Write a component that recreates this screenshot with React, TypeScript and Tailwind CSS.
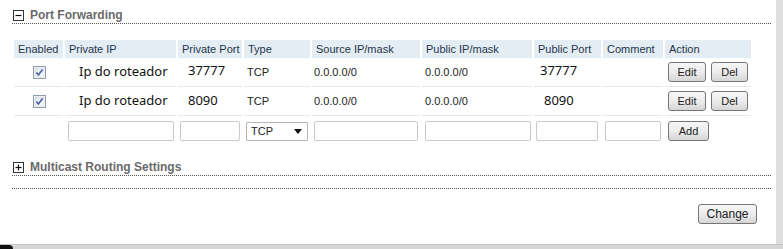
import React from "react";

const cols = "grid-cols-[49px_111px_64px_66px_108px_110px_67px_60px_86px]";

const headers = ["Enabled", "Private IP", "Private Port", "Type", "Source IP/mask", "Public IP/mask", "Public Port", "Comment", "Action"];

const rules = [
  { ip: "Ip do roteador", port: "37777", type: "TCP", src: "0.0.0.0/0", pub: "0.0.0.0/0", pubPort: "37777" },
  { ip: "Ip do roteador", port: "8090", type: "TCP", src: "0.0.0.0/0", pub: "0.0.0.0/0", pubPort: "8090" },
];

function Btn({ label, className = "" }: { label: string; className?: string }) {
  return (
    <button
      className={`h-[20px] rounded-[3px] border border-[#767676] bg-gradient-to-b from-[#f7f7f7] via-[#ececec] to-[#d6d6d6] text-[11px] text-[#222] font-['Liberation_Sans',Arial,sans-serif] leading-none ${className}`}
    >
      {label}
    </button>
  );
}

function Check() {
  return (
    <svg width="13" height="13" viewBox="0 0 13 13">
      <defs>
        <linearGradient id="cb" x1="0" y1="0" x2="1" y2="1">
          <stop offset="0" stopColor="#dfe3ea" />
          <stop offset="1" stopColor="#ffffff" />
        </linearGradient>
      </defs>
      <rect x="0.5" y="0.5" width="12" height="12" fill="#fff" stroke="#8f9cab" />
      <rect x="2" y="2" width="9" height="9" fill="url(#cb)" stroke="#c4ccd6" strokeWidth="0.6" />
      <path d="M3.4 6.4 L5.4 9 L9.6 3.4" fill="none" stroke="#4a5fa8" strokeWidth="1.6" />
    </svg>
  );
}

function Toggle({ plus }: { plus?: boolean }) {
  return (
    <svg width="11" height="11" viewBox="0 0 11 11">
      <rect x="0.5" y="0.5" width="10" height="10" fill="#fff" stroke="#333" />
      <path d="M2.5 5.5 H8.5" stroke="#111" strokeWidth="1.2" />
      {plus && <path d="M5.5 2.5 V8.5" stroke="#111" strokeWidth="1.2" />}
    </svg>
  );
}

function Field({ className = "" }: { className?: string }) {
  return <div className={`h-[20px] border border-[#c9c9c9] rounded-[2px] bg-white ${className}`} />;
}

export default function App() {
  const cell = "h-[29px] border-b border-[#e8e8e8] flex items-center whitespace-nowrap";
  const small = "font-['Liberation_Sans',Arial,sans-serif] text-[11px] text-[#222]";
  const typed = "font-['Noto_Sans',sans-serif] text-[13px] text-[#111]";
  return (
    <div className="w-[783px] h-[249px] flex flex-col overflow-hidden bg-[#dadada]">
      <div className="flex flex-1 min-h-0">
        <div className="w-[776px] bg-white pl-[12px] pr-[5px] pt-[8px] font-['Liberation_Sans',Arial,sans-serif]">
          {/* Port Forwarding */}
          <div className="flex items-center gap-[6px] pl-[1px] pb-[1px] border-b border-dotted border-[#555]">
            <Toggle />
            <span className="text-[12px] leading-[14px] font-bold text-[#6a6a6a]">Port Forwarding</span>
          </div>

          <div className={`grid ${cols} gap-x-[2px] mt-[16px] ml-[2px]`}>
            {headers.map((h) => (
              <div key={h} className="h-[18px] bg-[#e4ecf4] pl-[4px] whitespace-nowrap overflow-hidden text-[11px] leading-[18px] text-[#24364a]">
                {h}
              </div>
            ))}

            {rules.map((r, i) => (
              <React.Fragment key={i}>
                <div className={`${cell} justify-center pl-[1px]`}>
                  <Check />
                </div>
                <div className={`${cell} pl-[14px] ${typed}`}>{r.ip}</div>
                <div className={`${cell} pl-[10px] ${typed} ${i === 0 ? "pb-[3px]" : ""}`}>{r.port}</div>
                <div className={`${cell} pl-[3px] ${small}`}>{r.type}</div>
                <div className={`${cell} pl-[2px] ${small}`}>{r.src}</div>
                <div className={`${cell} pl-[3px] ${small}`}>{r.pub}</div>
                <div className={`${cell} ${i === 0 ? "pl-[6px] pb-[3px]" : "pl-[10px]"} ${typed}`}>{r.pubPort}</div>
                <div className={cell} />
                <div className={`${cell} pl-[3px] gap-[5px]`}>
                  <Btn label="Edit" className="w-[38px]" />
                  <Btn label="Del" className="w-[37px]" />
                </div>
              </React.Fragment>
            ))}

            <div className="h-[30px]" />
            <div className="h-[30px] flex items-center pl-[3px] pr-[2px]">
              <Field className="w-full" />
            </div>
            <div className="h-[30px] flex items-center px-[2px]">
              <Field className="w-full" />
            </div>
            <div className="h-[30px] flex items-center px-[2px]">
              <div className="h-[19px] w-full border border-[#b4b4b4] rounded-[1px] bg-white flex items-center justify-between pl-[4px] pr-[5px] text-[11px] text-[#222]">
                <span>TCP</span>
                <svg width="8" height="5" viewBox="0 0 8 5">
                  <path d="M0 0 H8 L4 5 Z" fill="#111" />
                </svg>
              </div>
            </div>
            <div className="h-[30px] flex items-center px-[2px]">
              <Field className="w-full" />
            </div>
            <div className="h-[30px] flex items-center pl-[3px] pr-[1px]">
              <Field className="w-full" />
            </div>
            <div className="h-[30px] flex items-center pl-[2px] pr-[3px]">
              <Field className="w-full" />
            </div>
            <div className="h-[30px] flex items-center pl-[2px] pr-[2px]">
              <Field className="w-full" />
            </div>
            <div className="h-[30px] flex items-center pl-[3px]">
              <Btn label="Add" className="w-[41px] h-[19px]" />
            </div>
          </div>

          {/* Multicast Routing Settings */}
          <div className="mt-[14px] flex items-center gap-[6px] pl-[1px] pb-[1px] border-b border-dotted border-[#555]">
            <Toggle plus />
            <span className="text-[12px] leading-[14px] font-bold text-[#6a6a6a]">Multicast Routing Settings</span>
          </div>
          <div className="mt-[12px] border-b border-dotted border-[#555]" />

          <div className="flex justify-end pr-[14px] mt-[15px]">
            <Btn label="Change" className="w-[59px] h-[19px] text-[12px]" />
          </div>
        </div>
        <div className="flex-1 bg-[#dedede]" />
      </div>
      <div className="h-[5px] shrink-0 bg-[#d6d6d6] border-t border-[#c4c4c4] flex">
        <div className="w-[13px] h-full bg-[#111] rounded-tr-[4px]" />
      </div>
    </div>
  );
}
